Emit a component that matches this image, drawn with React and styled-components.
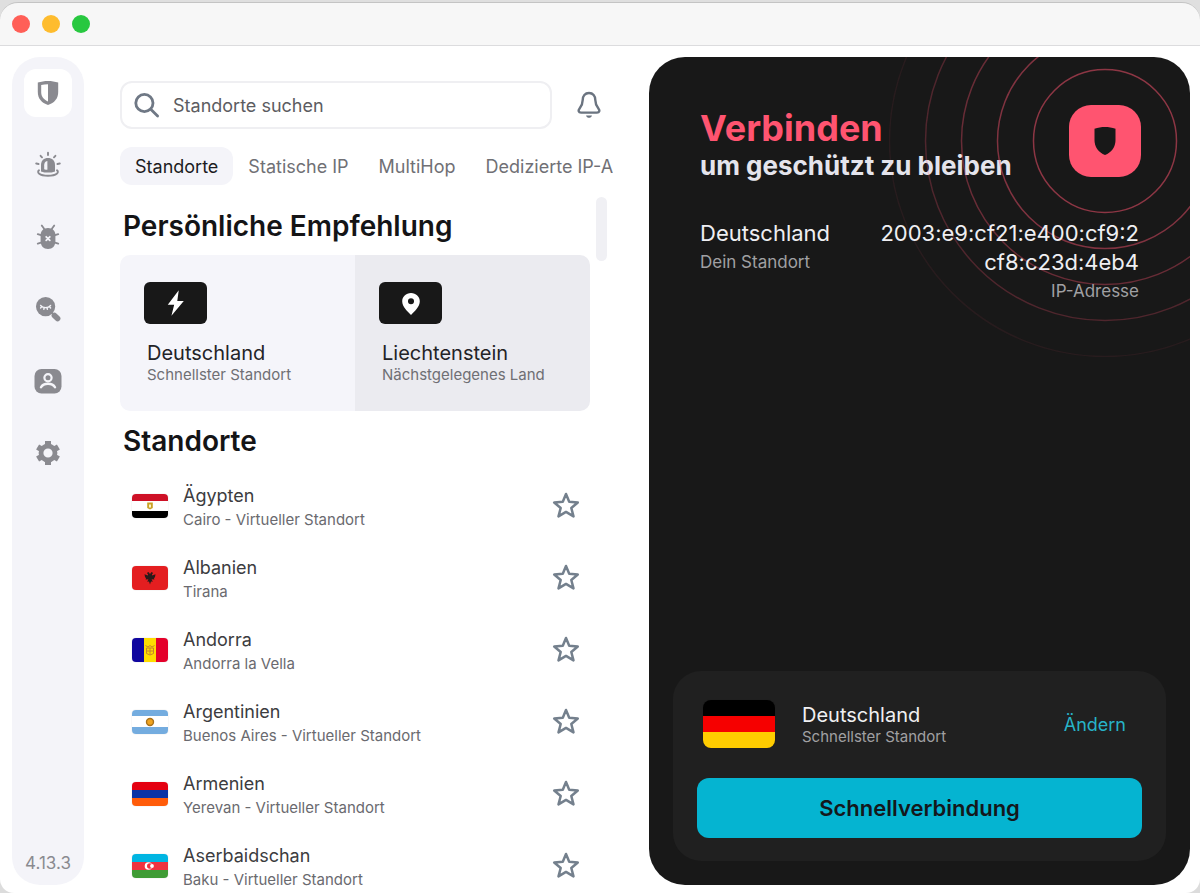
import React, { useState } from "react";
import styled, { createGlobalStyle } from "styled-components";

const GlobalStyle = createGlobalStyle`
  * {
    box-sizing: border-box;
  }
  body {
    margin: 0;
    background: #dcdcdc;
    font-family: Inter, "Liberation Sans", sans-serif;
    color: #17171a;
  }
  button, input {
    font-family: inherit;
  }
  button {
    border: 0;
    padding: 0;
    background: none;
    cursor: pointer;
  }
  h1, h2, p {
    margin: 0;
  }
`;

const navItems = [
  {
    id: "vpn",
    label: "VPN",
    icon: (
      <>
        <path d="M14 2 C17.500 2 21 2.600 24.200 3.600 V13 C24.200 19.500 20.500 23.800 14 26 C7.500 23.800 3.800 19.500 3.800 13 V3.600 C7 2.600 10.500 2 14 2 Z" />
        <path d="M14 5.200 V22.400 C9.600 20.600 7.200 17.600 7.200 13 V6.100 C9.400 5.500 11.600 5.200 14 5.200 Z" fill="#fff" />
      </>
    ),
  },
  {
    id: "alert",
    label: "Alert",
    icon: (
      <>
        <path d="M7 20.400 V14 C7 9.400 10 7 14 7 C18 7 21 9.400 21 14 V20.400 C16.500 22 11.500 22 7 20.400 Z" />
        <path d="M13.400 10 C11 10.300 10.200 12 10.200 14.200 V18.200 C11.200 18.600 12.300 18.700 13.400 18.700 Z" fill="#f4f4f9" />
        <path
          d="M5 19.300 C2.600 21.200 5 24.700 14 24.700 C23 24.700 25.400 21.200 23 19.300 M14 1.800 V4 M6.600 4.800 L8 6.300 M21.400 4.800 L20 6.300 M2.200 12.500 L4.600 13 M25.800 12.500 L23.400 13"
          fill="none"
          stroke="currentColor"
          strokeWidth="1.900"
          strokeLinecap="round"
        />
      </>
    ),
  },
  {
    id: "antivirus",
    label: "Antivirus",
    icon: (
      <>
        <path d="M14 5 C18.500 5 21.400 8 21.400 12 V18 C21.400 23 18.500 26 14 26 C9.500 26 6.600 23 6.600 18 V12 C6.600 8 9.500 5 14 5 Z" />
        <path
          d="M10.500 7 C10 5 9 4 7.800 2.600 M17.500 7 C18 5 19 4 20.200 2.600 M7 12.200 L3.800 11.200 M21 12.200 L24.200 11.200 M7 19.600 L3.800 20.600 M21 19.600 L24.200 20.600"
          fill="none"
          stroke="currentColor"
          strokeWidth="1.900"
          strokeLinecap="round"
        />
        <path d="M12.200 13.800 L15.800 17.400 M15.800 13.800 L12.200 17.400" stroke="#f4f4f9" strokeWidth="1.800" strokeLinecap="round" />
      </>
    ),
  },
  {
    id: "search",
    label: "Search",
    icon: (
      <>
        <circle cx="11.600" cy="11.600" r="9.600" />
        <path d="M20.400 20.400 L23.600 23.600" stroke="currentColor" strokeWidth="5.600" strokeLinecap="round" />
        <path d="M17.400 17.400 L20 20" stroke="currentColor" strokeWidth="2" />
        <path
          d="M6.600 10.400 C9 13.400 14.200 13.400 16.600 10.400 M7.600 11.800 L6.600 13 M10.200 12.800 L9.800 14.300 M13 12.800 L13.400 14.300 M15.600 11.800 L16.600 13"
          fill="none"
          stroke="#f4f4f9"
          strokeWidth="1.400"
          strokeLinecap="round"
        />
      </>
    ),
  },
  {
    id: "account",
    label: "Account",
    icon: (
      <>
        <rect x="0.500" y="2" width="27" height="24.500" rx="7" />
        <circle cx="14" cy="10.800" r="3.600" fill="none" stroke="#f4f4f9" strokeWidth="2.200" />
        <path d="M7 20.300 C9.500 15.600 18.500 15.600 21 20.300" fill="none" stroke="#f4f4f9" strokeWidth="2.400" strokeLinecap="round" />
      </>
    ),
  },
  {
    id: "settings",
    label: "Settings",
    icon: (
      <>
        <circle cx="14" cy="14" r="7" fill="none" stroke="currentColor" strokeWidth="4.800" />
        <path
          d="M14 2 V6 M14 22 V26 M3.600 8 L7.100 10 M20.900 18 L24.400 20 M3.600 20 L7.100 18 M20.900 10 L24.400 8"
          stroke="currentColor"
          strokeWidth="6"
        />
      </>
    ),
  },
];

const tabs = ["Standorte", "Statische IP", "MultiHop", "Dedizierte IP-Adresse"];

const suggestions = [
  {
    name: "Deutschland",
    note: "Schnellster Standort",
    icon: <path d="M15 0 L3 15.800 H10 L7 28 L20.500 11.800 H13.400 Z" />,
  },
  {
    name: "Liechtenstein",
    note: "Nächstgelegenes Land",
    icon: <path fillRule="evenodd" d="M12 3 C6.500 3 2.400 7 2.400 12 C2.400 18 8 23 12 27 C16 23 21.600 18 21.600 12 C21.600 7 17.500 3 12 3 Z M12 8.800 A3.300 3.300 0 1 1 12 15.400 A3.300 3.300 0 1 1 12 8.800 Z" />,
  },
];

const countries = [
  {
    name: "Ägypten",
    city: "Cairo - Virtueller Standort",
    flag: (
      <>
        <rect width="36" height="24" fill="#fff" />
        <rect width="36" height="7" fill="#ce1126" />
        <rect y="17" width="36" height="7" fill="#000" />
        <path d="M15.200 8.600 H20.800 V14 L18 15.400 L15.200 14 Z" fill="#c9a227" />
        <rect x="17" y="10.500" width="2" height="3" fill="#fff3c4" />
      </>
    ),
  },
  {
    name: "Albanien",
    city: "Tirana",
    flag: (
      <>
        <rect width="36" height="24" fill="#e41e20" />
        <path
          d="M18 8 L16.500 6 L14.800 7 L16 8.300 L15.800 9.400 L12.500 8.200 L13 11 L14 12.200 L13.600 13.400 L16.400 13.200 L15.200 15.800 L17 15.600 L18 18.400 L19 15.600 L20.800 15.800 L19.600 13.200 L22.400 13.400 L22 12.200 L23 11 L23.500 8.200 L20.200 9.400 L20 8.300 L21.200 7 L19.500 6 Z"
          fill="#2b1a1a"
        />
      </>
    ),
  },
  {
    name: "Andorra",
    city: "Andorra la Vella",
    flag: (
      <>
        <rect width="12" height="24" fill="#10069f" />
        <rect x="12" width="12" height="24" fill="#fedd00" />
        <rect x="24" width="12" height="24" fill="#e4002b" />
        <path d="M13.500 7.500 L16 9 L18 7.500 L20 9 L22.500 7.500 M14.500 10 H21.500 V15.500 L18 17 L14.500 15.500 Z M18 10 V16.500 M14.500 13 H21.500" fill="none" stroke="#c6842c" />
      </>
    ),
  },
  {
    name: "Argentinien",
    city: "Buenos Aires - Virtueller Standort",
    flag: (
      <>
        <rect width="36" height="24" fill="#fff" />
        <rect width="36" height="6" fill="#74acdf" />
        <rect y="17" width="36" height="7" fill="#74acdf" />
        <circle cx="18" cy="12" r="3.500" fill="#f0a420" stroke="#a9711b" strokeWidth="1.400" />
      </>
    ),
  },
  {
    name: "Armenien",
    city: "Yerevan - Virtueller Standort",
    flag: (
      <>
        <rect width="36" height="8" fill="#e40011" />
        <rect y="8" width="36" height="8" fill="#0a33a6" />
        <rect y="16" width="36" height="8" fill="#ff5c0a" />
      </>
    ),
  },
  {
    name: "Aserbaidschan",
    city: "Baku - Virtueller Standort",
    flag: (
      <>
        <rect width="36" height="8" fill="#00b5e2" />
        <rect y="8" width="36" height="8" fill="#ef3340" />
        <rect y="16" width="36" height="8" fill="#3f9c35" />
        <circle cx="16.500" cy="12" r="3.800" fill="#fff" />
        <circle cx="17.800" cy="12" r="2.800" fill="#ef3340" />
        <circle cx="20" cy="12" r="1.900" fill="#fff" />
      </>
    ),
  },
];

const rings = [
  { r: 72, opacity: 0.5 },
  { r: 108, opacity: 0.45 },
  { r: 144, opacity: 0.35 },
  { r: 180, opacity: 0.24 },
  { r: 216, opacity: 0.07 },
];

const App = () => {
  const [tab, setTab] = useState("Standorte");
  const [nav, setNav] = useState("vpn");

  return (
    <>
      <GlobalStyle />
      <Window>
        <TitleBar>
          <Light color="#ff5f57" aria-label="Schließen" />
          <Light color="#febc2e" aria-label="Minimieren" />
          <Light color="#28c840" aria-label="Maximieren" />
        </TitleBar>
        <Body>
          <Sidebar>
            {navItems.map((item) => (
              <NavButton key={item.id} $active={nav === item.id} aria-label={item.label} onClick={() => setNav(item.id)}>
                <svg width="28" height="28" viewBox="0 0 28 28" fill="currentColor">{item.icon}</svg>
              </NavButton>
            ))}
            <Version>4.13.3</Version>
          </Sidebar>

          <Main>
            <SearchRow>
              <SearchBox>
                <svg width="26" height="26" viewBox="0 0 26 26" fill="none" stroke="#6f7885" strokeWidth="2.800" strokeLinecap="round">
                  <circle cx="10.400" cy="11" r="8.600" />
                  <path d="M17 17.500 L23.600 24" />
                </svg>
                <input type="text" placeholder="Standorte suchen" aria-label="Standorte suchen" />
              </SearchBox>
              <BellButton aria-label="Benachrichtigungen">
                <svg width="26" height="28" viewBox="0 0 26 28" fill="none" stroke="#6b7480" strokeWidth="2.400" strokeLinejoin="round">
                  <path d="M13 2 C9 2 6.700 5 6.700 9 C6.700 13.500 5.400 15.200 3.600 17.500 C1.900 19.600 2.600 21.600 5 21.600 H21 C23.400 21.600 24.100 19.600 22.400 17.500 C20.600 15.200 19.300 13.500 19.300 9 C19.300 5 17 2 13 2 Z" />
                  <path d="M10 24.500 H16 C15.200 27.600 10.800 27.600 10 24.500 Z" fill="#6b7480" stroke="none" />
                </svg>
              </BellButton>
            </SearchRow>
            <Tabs>
              {tabs.map((name) => (
                <Tab key={name} $active={tab === name} onClick={() => setTab(name)}>{name}</Tab>
              ))}
            </Tabs>
            <ScrollArea>
              <ScrollContent>
                <SectionTitle>Persönliche Empfehlung</SectionTitle>
                <Suggestions>
                  {suggestions.map((item) => (
                    <Suggestion key={item.name}>
                      <SuggestionIcon>
                        <svg width="22" height="28" viewBox="0 0 24 28" fill="#fff">{item.icon}</svg>
                      </SuggestionIcon>
                      <SuggestionText>
                        <PlaceName>{item.name}</PlaceName>
                        <PlaceNote>{item.note}</PlaceNote>
                      </SuggestionText>
                    </Suggestion>
                  ))}
                </Suggestions>
                <SectionTitle>Standorte</SectionTitle>
                <List>
                  {countries.map((country) => (
                    <Row key={country.name}>
                      <Flag width="36" height="24" viewBox="0 0 36 24">{country.flag}</Flag>
                      <RowText>
                        <RowName>{country.name}</RowName>
                        <RowCity>{country.city}</RowCity>
                      </RowText>
                      <button aria-label={`${country.name} als Favorit`}>
                        <Star />
                      </button>
                    </Row>
                  ))}
                </List>
              </ScrollContent>
              <ScrollThumb />
            </ScrollArea>
          </Main>

          <Panel>
            <Rings width="432" height="432" viewBox="0 0 432 432" fill="none" stroke="#ff5470" strokeWidth="1.500">
              {rings.map((ring) => (
                <circle key={ring.r} cx="216" cy="216" r={ring.r - 0.5} strokeOpacity={ring.opacity} />
              ))}
            </Rings>
            <PanelHeader>
              <div>
                <Status>Verbinden</Status>
                <StatusNote>um geschützt zu bleiben</StatusNote>
              </div>
              <Badge>
                <svg width="24" height="28" viewBox="0 0 24 28" fill="#181818">
                  <path d="M12 0 C15.500 0 19 0.600 22.500 1.700 V13 C22.500 20 18.500 25.500 12 28 C5.500 25.500 1.500 20 1.500 13 V1.700 C5 0.600 8.500 0 12 0 Z" />
                </svg>
              </Badge>
            </PanelHeader>
            <Details>
              <div>
                <DetailValue>Deutschland</DetailValue>
                <DetailLabel>Dein Standort</DetailLabel>
              </div>
              <IpDetail>
                <DetailValue>2003:e9:cf21:e400:cf9:2<wbr />cf8:c23d:4eb4</DetailValue>
                <DetailLabel>IP-Adresse</DetailLabel>
              </IpDetail>
            </Details>
            <ConnectCard>
              <Target>
                <Flag width="72" height="48" viewBox="0 0 72 48" $large>
                  <rect width="72" height="16" fill="#000" />
                  <rect y="16" width="72" height="16" fill="#f60000" />
                  <rect y="32" width="72" height="16" fill="#ffcc00" />
                </Flag>
                <TargetText>
                  <PlaceName $light>Deutschland</PlaceName>
                  <PlaceNote $light>Schnellster Standort</PlaceNote>
                </TargetText>
                <ChangeButton>Ändern</ChangeButton>
              </Target>
              <ConnectButton>Schnellverbindung</ConnectButton>
            </ConnectCard>
          </Panel>
        </Body>
      </Window>
    </>
  );
};

const Star = () => (
  <svg width="28" height="32" viewBox="0 0 28 32" fill="none" stroke="#74808d" strokeWidth="2.500" strokeLinejoin="round">
    <path d="M14 5 L17.200 12.800 L25.800 13.500 L19.300 19 L21.500 27.400 L14 22.900 L6.500 27.400 L8.700 19 L2.200 13.500 L10.800 12.800 Z" />
  </svg>
);

const Window = styled.div`
  display: flex;
  flex-direction: column;
  height: 100vh;
  padding-top: 2px;
  border-radius: 0 0 14px 14px;
  background: linear-gradient(#dfdfdf 22px, #fff 22px);
`;

const TitleBar = styled.header`
  display: flex;
  align-items: center;
  gap: 12px;
  flex: none;
  height: 44px;
  padding: 0 12px;
  background: #f7f7f7;
  border-top: 1px solid #c4c4c4;
  border-bottom: 1px solid #dcdcde;
  border-radius: 18px 18px 0 0;
`;

const Light = styled.button`
  width: 18px;
  height: 18px;
  border-radius: 50%;
  background: ${(props) => props.color};
`;

const Body = styled.div`
  display: grid;
  grid-template-columns: 72px minmax(0, 493fr) minmax(0, 541fr);
  gap: 36px;
  flex: 1;
  min-height: 0;
  padding: 11px 10px 0 12px;
`;

const Sidebar = styled.nav`
  display: flex;
  flex-direction: column;
  align-items: center;
  gap: 24px;
  margin-bottom: 8px;
  padding: 12px 0;
  border-radius: 28px;
  background: #f4f4f9;
`;

const NavButton = styled.button`
  display: flex;
  align-items: center;
  justify-content: center;
  width: 48px;
  height: 48px;
  border-radius: 12px;
  color: #8a8a90;
  background: ${(props) => (props.$active ? "#fff" : "transparent")};
`;

const Version = styled.span`
  margin-top: auto;
  font-size: 17px;
  line-height: 20px;
  color: #8a8a90;
`;

const Main = styled.main`
  display: flex;
  flex-direction: column;
  min-height: 0;
  padding-top: 24px;
`;

const SearchRow = styled.div`
  display: flex;
  align-items: center;
  gap: 24px;
  padding-right: 11px;
`;

const SearchBox = styled.label`
  display: flex;
  align-items: center;
  gap: 13px;
  flex: 1;
  height: 48px;
  padding: 0 12px;
  border: 2px solid #efeff2;
  border-radius: 12px;

  input {
    flex: 1;
    min-width: 0;
    padding: 0;
    border: 0;
    outline: 0;
    font-size: 18px;
    background: none;
  }
  input::placeholder {
    color: #5c5c61;
    opacity: 1;
  }
`;

const BellButton = styled.button`
  display: flex;
`;

const Tabs = styled.div`
  display: flex;
  flex: none;
  margin: 18px 0 12px;
  overflow: hidden;
`;

const Tab = styled.button`
  flex: none;
  height: 38px;
  padding: 0 15px;
  border-radius: 12px;
  font-size: 18px;
  color: ${(props) => (props.$active ? "#1c1c22" : "#707075")};
  background: ${(props) => (props.$active ? "#f4f4f9" : "transparent")};
`;

const ScrollArea = styled.div`
  display: flex;
  gap: 6px;
  flex: 1;
  min-height: 0;
  padding-right: 6px;
`;

const ScrollContent = styled.div`
  flex: 1;
  min-width: 0;
  overflow-y: auto;
  scrollbar-width: none;
`;

const ScrollThumb = styled.div`
  width: 11px;
  height: 64px;
  border-radius: 6px;
  background: #f0f0f4;
`;

const SectionTitle = styled.h2`
  padding: 0 3px;
  font-size: 28px;
  font-weight: 600;
  line-height: 58px;
  color: #141416;
`;

const Suggestions = styled.div`
  display: grid;
  grid-template-columns: 1fr 1fr;
  margin-bottom: 1px;
  border-radius: 10px;
  overflow: hidden;
`;

const Suggestion = styled.button`
  height: 156px;
  padding: 0 24px;
  text-align: left;
  background: #f5f5fa;

  & + & {
    background: #ebebf0;
  }
`;

const SuggestionIcon = styled.span`
  display: flex;
  align-items: center;
  justify-content: center;
  width: 63px;
  height: 42px;
  border-radius: 6px;
  background: #181818;
`;

const SuggestionText = styled.div`
  padding: 17px 3px 0;
`;

const PlaceName = styled.p`
  font-size: 20px;
  line-height: 24px;
  color: ${(props) => (props.$light ? "#f0f0f2" : "#232327")};
`;

const PlaceNote = styled.p`
  font-size: 15px;
  line-height: 20px;
  color: ${(props) => (props.$light ? "#a0a0a3" : "#6f6f74")};
`;

const List = styled.ul`
  margin: 0;
  padding: 0;
  list-style: none;
`;

const Row = styled.li`
  display: flex;
  align-items: center;
  gap: 15px;
  height: 72px;
  padding: 0 10px 0 12px;
`;

const Flag = styled.svg`
  flex: none;
  border-radius: ${(props) => (props.$large ? "8px" : "4px")};
  box-shadow: 0 0 1px rgba(0, 0, 0, 0.3);
`;

const RowText = styled.div`
  flex: 1;
  min-width: 0;
  padding-top: 4px;
`;

const RowName = styled.p`
  font-size: 18px;
  line-height: 24px;
  color: #3c3c40;
`;

const RowCity = styled.p`
  font-size: 15px;
  line-height: 24px;
  color: #6a6a6f;
`;

const Panel = styled.section`
  position: relative;
  display: flex;
  flex-direction: column;
  margin-bottom: 8px;
  padding: 48px 24px 24px;
  border-radius: 36px;
  background: #181818;
  overflow: hidden;
`;

const Rings = styled.svg`
  position: absolute;
  top: -132px;
  right: -131px;
`;

const PanelHeader = styled.div`
  display: flex;
  justify-content: space-between;
  padding: 0 25px 0 27px;
`;

const Status = styled.h1`
  font-size: 36px;
  font-weight: 700;
  line-height: 46px;
  color: #ff5470;
`;

const StatusNote = styled.p`
  font-size: 26px;
  font-weight: 700;
  line-height: 30px;
  color: #e4e4ec;
`;

const Badge = styled.div`
  position: relative;
  display: flex;
  align-items: center;
  justify-content: center;
  width: 72px;
  height: 72px;
  border-radius: 22px;
  background: #ff5470;
`;

const Details = styled.div`
  position: relative;
  display: flex;
  justify-content: space-between;
  gap: 24px;
  margin-top: 38px;
  padding: 0 27px;
`;

const IpDetail = styled.div`
  text-align: right;
`;

const DetailValue = styled.p`
  font-size: 22px;
  line-height: 29px;
  color: #efeff2;
`;

const DetailLabel = styled.p`
  font-size: 17px;
  line-height: 29px;
  color: #a0a0a3;
`;

const ConnectCard = styled.div`
  margin-top: auto;
  padding: 29px 24px 23px;
  border-radius: 28px;
  background: #202020;
`;

const Target = styled.div`
  display: flex;
  align-items: center;
  padding: 0 16px 0 6px;
`;

const TargetText = styled.div`
  flex: 1;
  padding: 2px 0 0 27px;
`;

const ChangeButton = styled.button`
  font-size: 18px;
  color: #27b3c8;
`;

const ConnectButton = styled.button`
  width: 100%;
  height: 60px;
  margin-top: 30px;
  border-radius: 12px;
  font-size: 22px;
  font-weight: 600;
  color: #14181c;
  background: #05b4d1;
`;

export default App;
